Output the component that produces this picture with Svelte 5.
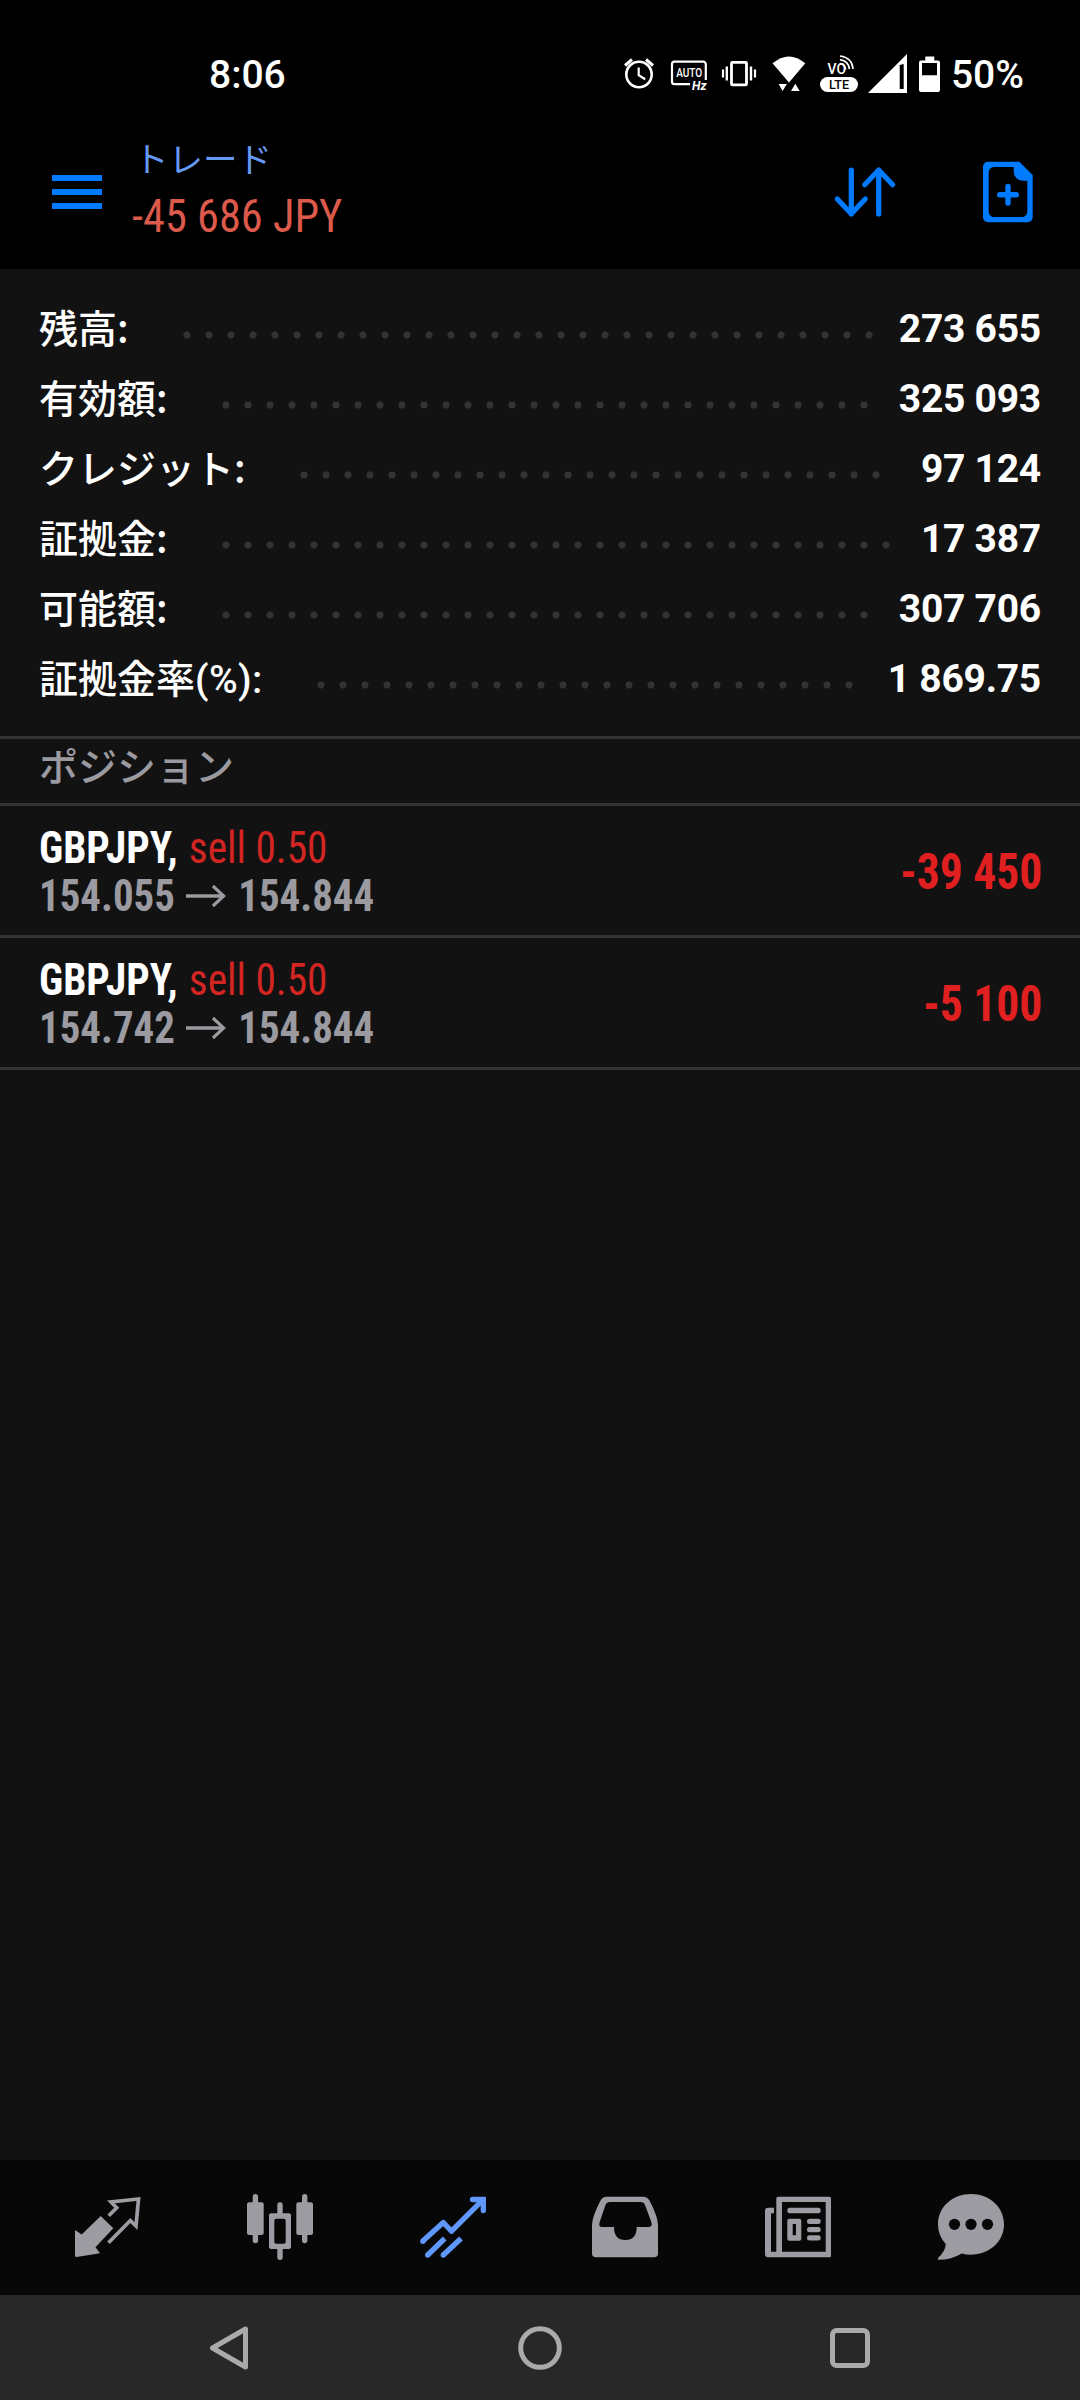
<script>
  let profit = '-45 686 JPY';

  const summary = [
    { label: '残高:', value: '273 655' },
    { label: '有効額:', value: '325 093' },
    { label: 'クレジット:', value: '97 124' },
    { label: '証拠金:', value: '17 387' },
    { label: '可能額:', value: '307 706' },
    { label: '証拠金率', suffix: '(%):', value: '1 869.75' },
  ];

  const positions = [
    { symbol: 'GBPJPY', side: 'sell', volume: '0.50', open: '154.055', current: '154.844', profit: '-39 450' },
    { symbol: 'GBPJPY', side: 'sell', volume: '0.50', open: '154.742', current: '154.844', profit: '-5 100' },
  ];

  const tabs = ['quotes', 'chart', 'trade', 'history', 'news', 'chat'];
  let active = 'trade';
</script>

<div class="screen">
  <div class="status">
    <span class="clock">8:06</span>
    <svg class="indicators" width="320" height="44" viewBox="623 52 320 44" fill="#fff">
      <!-- alarm -->
      <g fill="none" stroke="#fff">
        <circle cx="639" cy="74.5" r="12.7" stroke-width="2.6" />
        <path d="M625 65.500l7-6M646 59.500l7 6" stroke-width="3" />
        <path d="M638.700 67.500v7.700l6.500 4" stroke-width="2.200" />
      </g>
      <!-- refresh rate -->
      <path d="M690 84.200H674.500a2.500 2.500 0 0 1-2.500-2.500V64.200a2.500 2.500 0 0 1 2.500-2.500H703.300a2.500 2.500 0 0 1 2.500 2.500V80" fill="none" stroke="#fff" stroke-width="2.200" />
      <text x="676.200" y="77.300" font-size="13" font-weight="500" textLength="26" lengthAdjust="spacingAndGlyphs">AUTO</text>
      <text x="692" y="90" font-size="12" font-weight="700" font-style="italic" textLength="14.500" lengthAdjust="spacingAndGlyphs">Hz</text>
      <!-- vibrate -->
      <rect x="731.500" y="62.300" width="15" height="22.600" rx="1" fill="none" stroke="#fff" stroke-width="2.800" />
      <path d="M726.800 66.500v14M751 66.500v14" stroke="#fff" stroke-width="2.400" />
      <path d="M723 69.500v8M755 69.500v8" stroke="#fff" stroke-width="2.200" />
      <!-- wifi -->
      <path d="M772.500 63.300Q789 49.500 805.300 63.300L789 82.500z" />
      <path d="M778.600 84h8.200l-4.200 7zM791 91h8.700l-4.400-7.300z" />
      <!-- volte -->
      <text x="827.500" y="74" font-size="14" font-weight="500" textLength="18.500" lengthAdjust="spacingAndGlyphs">VO</text>
      <path d="M840 63.500q5 1 5.600 6M840 59.700q8.500 1.300 9.500 9.500M840 56q12 1.500 13 13" fill="none" stroke="#fff" stroke-width="1.700" />
      <rect x="820" y="77" width="38" height="15" rx="7.500" />
      <text x="829" y="88.800" font-size="12.300" font-weight="500" fill="#000" textLength="20" lengthAdjust="spacingAndGlyphs">LTE</text>
      <!-- signal -->
      <path d="M868 93L907 54V93zM899.700 65v24h4V64z" fill-rule="evenodd" />
      <!-- battery -->
      <path d="M925.300 56.500h9v4h3.700a2 2 0 0 1 2 2V90a2 2 0 0 1-2 2H921a2 2 0 0 1-2-2V62.500a2 2 0 0 1 2-2h4.300zM922 63v12.300h15V63z" fill-rule="evenodd" />
    </svg>
    <span class="percent">50%</span>
  </div>

  <header>
    <svg class="menu" width="50" height="36" viewBox="0 0 50 36" fill="#007aff">
      <rect y="1" width="50" height="6" />
      <rect y="15" width="50" height="6" />
      <rect y="29" width="50" height="6" />
    </svg>
    <div class="title">
      <h1>トレード</h1>
      <span class="total condensed">{profit}</span>
    </div>
    <svg class="sort" width="64" height="60" viewBox="833 162 64 60" fill="none" stroke="#007aff" stroke-width="5.200" stroke-linecap="round" stroke-linejoin="round">
      <path d="M851.300 170v44M837.300 199l14 14.700 14-14.700" />
      <path d="M878.700 214v-44M864.700 184.700l14-14.700 14 14.700" />
    </svg>
    <svg class="new" width="50" height="62" viewBox="983 161 50 62">
      <path d="M988 161.700H1019.300L1032.700 175V217.300a5 5 0 0 1-5 5H988a5 5 0 0 1-5-5V166.700a5 5 0 0 1 5-5zM994 167a5.300 5.300 0 0 0-5.300 5.300V211.700a5.300 5.300 0 0 0 5.300 5.300H1022a5.300 5.300 0 0 0 5.300-5.300V180.700H1022.500a8.800 8.800 0 0 1-8.800-8.800V167z" fill="#007aff" fill-rule="evenodd" />
      <path d="M1008 186.500v16.600M999.700 194.700h16.600" stroke="#007aff" stroke-width="5.400" stroke-linecap="round" />
    </svg>
  </header>

  <main>
    <section class="summary">
      {#each summary as row}
        <div class="row">
          <span class="label">{row.label}{#if row.suffix}<span class="suffix">{row.suffix}</span>{/if}</span>
          <span class="leader"><span class="dots"></span></span>
          <span class="value">{row.value}</span>
        </div>
      {/each}
    </section>

    <h2>ポジション</h2>

    {#each positions as p}
      <div class="position">
        <div class="details">
          <div class="line">
            <span class="symbol condensed">{p.symbol},</span>
            <span class="side condensed">{p.side} {p.volume}</span>
          </div>
          <div class="line prices">
            <span class="condensed">{p.open}</span>
            <svg width="43" height="24" viewBox="0 0 43 24" fill="none" stroke="#9a9aa0" stroke-width="3.300">
              <path d="M0 12H40.500M29 2L40.500 12 29 22" />
            </svg>
            <span class="condensed">{p.current}</span>
          </div>
        </div>
        <span class="amount condensed">{p.profit}</span>
      </div>
    {/each}
  </main>

  <nav class="tabs">
    {#each tabs as tab}
      <svg class="tab" class:active={tab === active} width="66" height="66" viewBox="0 0 66 66">
        {#if tab === 'quotes'}
          <path d="M0 36L6.700 40.500 25.700 22 38.300 34.300 20.500 53.300 25 59.300 1.500 63Q0 63 0 61.500z" fill="currentColor" />
          <path d="M33.700 21.700L41.700 13.800 36 8 63.500 5 61 32 55.300 26.500 33.500 48.700" fill="none" stroke="currentColor" stroke-width="3.700" />
        {:else if tab === 'chart'}
          <g fill="currentColor">
            <rect x="5.700" width="5.400" height="49.300" rx="2.700" />
            <rect y="8.300" width="16.700" height="32.700" rx="2" />
            <rect x="55" width="5.400" height="49.300" rx="2.700" />
            <rect x="49.300" y="8.300" width="16.700" height="32.700" rx="2" />
            <path d="M30.300 19.300V11a2.700 2.700 0 0 1 5.400 0V19.300H42a2 2 0 0 1 2 2V53a2 2 0 0 1-2 2H35.700V63.300a2.700 2.700 0 0 1-5.400 0V55H24a2 2 0 0 1-2-2V21.300a2 2 0 0 1 2-2zM29.300 24.700a2 2 0 0 0-2 2V47.700a2 2 0 0 0 2 2H36.700a2 2 0 0 0 2-2V26.700a2 2 0 0 0-2-2z" fill-rule="evenodd" />
          </g>
        {:else if tab === 'trade'}
          <g fill="none" stroke="currentColor" stroke-width="5.300">
            <path d="M2.500 47.300L23.300 28.500 31.500 37.200 63 5.700" stroke-linejoin="round" />
            <path d="M52.500 5.500H63.300V16.500" stroke-linecap="round" />
            <path d="M7.700 61L24.700 44.500M23.300 61L41 44.500" />
          </g>
          <g fill="currentColor">
            <circle cx="2.900" cy="47.200" r="2.700" />
            <circle cx="7.700" cy="61" r="2.700" />
            <circle cx="23.300" cy="61" r="2.700" />
          </g>
        {:else if tab === 'history'}
          <path d="M14.500 2.700H51Q55.500 2.700 57.500 6.500 66 23 66 31V59.500Q66 63.300 62 63.300H4Q0 63.300 0 59.500V31Q0 23 8.500 6.500 10.500 2.700 14.500 2.700zM18 8Q14.700 8 13.500 11L7.500 28.500Q6.500 33 10 33H22Q22 46 33.200 46 44.700 46 44.700 33H56.500Q60.500 33 59.500 28.500L53 11Q52 8 48.500 8z" fill="currentColor" fill-rule="evenodd" />
        {:else if tab === 'news'}
          <g fill="currentColor">
            <path d="M13 2.700H64.500Q66 2.700 66 4.200V61.800Q66 63.300 64.500 63.300H3Q0 63.300 0 60.300V16.700Q0 13.700 3 13.700H9V19.300H6V57.700H11.300V4.400Q11.300 2.700 13 2.700zM17 8V57.700H60.700V8z" fill-rule="evenodd" />
            <rect x="22.300" y="13.700" width="33.400" height="5.600" rx="2.500" />
            <path d="M24.300 24.700H34.300a2 2 0 0 1 2 2V44.700a2 2 0 0 1-2 2H24.300a2 2 0 0 1-2-2V26.700a2 2 0 0 1 2-2zM27.700 30V41.300H31V30z" fill-rule="evenodd" />
            <rect x="42" y="24.700" width="13.700" height="5.300" rx="2.500" />
            <rect x="42" y="33" width="13.700" height="5.300" rx="2.500" />
            <rect x="42" y="41.300" width="13.700" height="5.300" rx="2.500" />
          </g>
        {:else}
          <path d="M33 0C51.500 0 66 13 66 30.300S51.500 60.700 33 60.700Q28 60.700 23.700 59.500 13 66 0 65.800V64Q7.500 57 7.700 50 0 41.500 0 30.300C0 13 14.500 0 33 0z" fill="currentColor" />
          <g fill="#070707">
            <circle cx="16.500" cy="30.300" r="5.600" />
            <circle cx="33" cy="30.300" r="5.600" />
            <circle cx="49.500" cy="30.300" r="5.600" />
          </g>
        {/if}
      </svg>
    {/each}
  </nav>

  <nav class="system">
    <svg width="44" height="46" viewBox="0 0 44 46">
      <path d="M4.500 23L37.500 4V42z" />
    </svg>
    <svg width="46" height="46" viewBox="0 0 46 46">
      <circle cx="23" cy="23" r="19.300" />
    </svg>
    <svg width="44" height="46" viewBox="0 0 44 46">
      <rect x="4.500" y="5.500" width="35" height="35" rx="4" />
    </svg>
  </nav>
</div>

<style>
  :global(body) {
    background: #121212;
  }

  .screen {
    display: flex;
    flex-direction: column;
    width: 1080px;
    height: 2400px;
    box-sizing: border-box;
    background: #121212;
    color: #fff;
    font-family: Roboto, 'Noto Sans CJK JP', sans-serif;
    overflow: hidden;
  }

  .condensed {
    font-family: 'Roboto Condensed', Roboto, sans-serif;
    font-stretch: 75%;
    white-space: nowrap;
  }

  .status {
    display: flex;
    align-items: center;
    height: 110px;
    padding: 41px 56px 0 209px;
    box-sizing: border-box;
    background: #000;
    font-size: 39px;
    font-weight: 500;
    line-height: 69px;
  }

  .indicators {
    margin-left: auto;
    margin-right: 8px;
    margin-bottom: 3px;
  }

  header {
    display: flex;
    align-items: center;
    height: 159px;
    padding: 0 47px 0 52px;
    box-sizing: border-box;
    background: #000;
  }

  .menu {
    margin-top: 5px;
  }

  .title {
    display: flex;
    flex-direction: column;
    margin-left: 30px;
  }

  h1 {
    margin: 0 0 0 2px;
    color: #6699f5;
    font: 400 34.5px/48px 'Noto Sans CJK JP', sans-serif;
  }

  .total {
    padding-top: 5px;
    color: #dc5a4b;
    font-size: 46px;
    line-height: 60px;
    transform: scaleX(0.965);
    transform-origin: left;
  }

  .sort {
    margin-left: auto;
    margin-top: 5px;
  }

  .new {
    margin-left: 86px;
    margin-top: 5px;
  }

  main {
    flex: 1;
  }

  .summary {
    padding: 24px 39px 23px;
    border-bottom: 3px solid #333;
  }

  .row {
    display: flex;
    align-items: center;
    height: 70px;
    font-size: 39px;
    line-height: 70px;
  }

  .label {
    padding-bottom: 4px;
    font-family: 'Noto Sans CJK JP', sans-serif;
    font-weight: 500;
    line-height: 66px;
  }

  .suffix {
    font-family: Roboto, sans-serif;
    line-height: 0;
    letter-spacing: 0.4px;
  }

  .leader {
    flex: 1;
    margin: 14px 15px 0 47px;
  }

  /* only whole dots are shown, so the width snaps to the dot pitch */
  .dots {
    display: block;
    width: round(down, 100%, 22px);
    height: 22px;
    background: radial-gradient(circle, #333 3.200px, transparent 3.900px) 0 0 / 22px 22px;
  }

  .value {
    padding-top: 2px;
    font-weight: 700;
    letter-spacing: -0.25px;
    line-height: 68px;
  }

  h2 {
    height: 64px;
    margin: 0;
    padding-left: 39px;
    border-bottom: 3px solid #333;
    color: #9a9aa0;
    font: 500 39px/50px 'Noto Sans CJK JP', sans-serif;
  }

  .position {
    display: flex;
    align-items: center;
    justify-content: space-between;
    height: 129px;
    padding: 0 38px 0 39px;
    border-bottom: 3px solid #333;
  }

  .details,
  .amount {
    padding-top: 2px;
  }

  .line {
    display: flex;
    align-items: center;
    height: 48px;
    font-size: 44px;
    line-height: 48px;
    transform: scaleX(0.938);
    transform-origin: left;
  }

  .symbol {
    margin-right: 12px;
    font-weight: 700;
  }

  .side {
    color: #d32522;
  }

  .prices {
    color: #9a9aa0;
    font-weight: 700;
    transform: scaleX(0.93);
  }

  .prices svg {
    margin: 0 13px 0 12px;
  }

  .amount {
    color: #e02020;
    font-size: 49.5px;
    font-weight: 700;
    transform: scaleX(0.92);
    transform-origin: right;
  }

  .tabs {
    display: flex;
    justify-content: space-between;
    height: 135px;
    padding: 34px 76.4px 0 74.6px;
    box-sizing: border-box;
    background: #070707;
  }

  .tab {
    color: #9c9ca2;
  }

  .tab.active {
    color: #5f97fb;
  }

  .system {
    display: flex;
    align-items: center;
    justify-content: space-between;
    height: 105px;
    padding: 0 208px;
    box-sizing: border-box;
    background: #282828;
  }

  .system svg {
    fill: none;
    stroke: #aaa;
    stroke-width: 5;
    stroke-linejoin: round;
  }
</style>
